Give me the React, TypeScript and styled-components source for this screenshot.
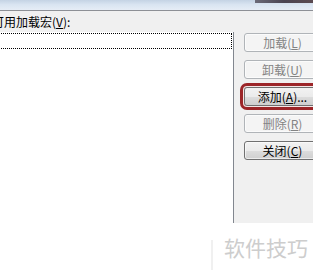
import React from "react";
import styled, { createGlobalStyle } from "styled-components";

const Global = createGlobalStyle`
  html, body { margin: 0; padding: 0; background: #ffffff; }
  body { font-family: "Noto Sans CJK SC", "Liberation Sans", sans-serif; }
`;

const Page = styled.div`
  width: 313px;
  height: 271px;
  overflow: hidden;
  background: #ffffff;
  display: flex;
  flex-direction: column;
`;

const TitleBar = styled.div`
  height: 10px;
  flex: none;
  display: flex;
  align-items: flex-start;
  justify-content: flex-end;
  background: linear-gradient(180deg, #c4d3e4 0%, #d9e4f1 45%, #e6edf6 100%);
  border-bottom: 1px solid #8d9096;
`;

const TitleDark = styled.div`
  width: 58px;
  height: 3px;
  background: linear-gradient(90deg, #6b6a78 0%, #4a4452 50%, #5a4a50 100%);
`;

const Body = styled.div`
  height: 212px;
  flex: none;
  display: flex;
  background: #f0f0f0;
`;

const LeftCol = styled.div`
  width: 246px;
  margin-left: -12px;
  flex: none;
  display: flex;
  flex-direction: column;
`;

const Label = styled.div`
  height: 21px;
  padding-left: 4px;
  font-size: 12px;
  line-height: 21px;
  color: #000;
  white-space: nowrap;
`;

const ListBox = styled.div`
  flex: 1;
  background: #ffffff;
  border-right: 1px solid #82878f;
  padding-top: 1px;
`;

const FocusRow = styled.div`
  height: 14px;
  border: 1px dotted #000;
  margin-right: 1px;
`;

const RightCol = styled.div`
  flex: none;
  padding-top: 22px;
  padding-left: 10px;
  display: flex;
  flex-direction: column;
  gap: 8px;
`;

const Button = styled.div<{ $disabled?: boolean; $marked?: boolean }>`
  width: 75px;
  height: 17px;
  border: 1px solid ${(p) => (p.$disabled ? "#b0b4b8" : "#707070")};
  border-radius: 3px;
  background: ${(p) =>
    p.$disabled
      ? "#f4f4f4"
      : "linear-gradient(180deg, #f2f2f2 0%, #ebebeb 50%, #dddddd 51%, #cfcfcf 100%)"};
  color: ${(p) => (p.$disabled ? "#838383" : "#000")};
  font-size: 12px;
  line-height: 17px;
  text-align: center;
  white-space: nowrap;
  box-shadow: ${(p) =>
    p.$marked ? "0 0 0 1px #f3e6e6, 0 0 0 4px #9c2528" : "inset 0 0 0 1px rgba(255,255,255,0.6)"};
  padding-right: 8px;
  box-sizing: content-box;
`;

const Footer = styled.div`
  flex: 1;
  display: flex;
  justify-content: flex-end;
  align-items: flex-start;
  padding-top: 12px;
  padding-right: 5px;
  gap: 4px;
`;

const Mark = styled.div`
  width: 7px;
  height: 30px;
  margin-top: 5px;
  border-left: 2px solid #ececec;
  opacity: 0.8;
`;

const Watermark = styled.div`
  font-size: 21px;
  line-height: 24px;
  color: #cdcdcd;
`;

export default function App() {
  return (
    <Page>
      <Global />
      <TitleBar>
        <TitleDark />
      </TitleBar>
      <Body>
        <LeftCol>
          <Label>
            可用加载宏(<u>V</u>):
          </Label>
          <ListBox>
            <FocusRow />
          </ListBox>
        </LeftCol>
        <RightCol>
          <Button $disabled>
            加载(<u>L</u>)
          </Button>
          <Button $disabled>
            卸载(<u>U</u>)
          </Button>
          <Button $marked>
            添加(<u>A</u>)...
          </Button>
          <Button $disabled>
            删除(<u>R</u>)
          </Button>
          <Button>
            关闭(<u>C</u>)
          </Button>
        </RightCol>
      </Body>
      <Footer>
        <Mark />
        <Watermark>软件技巧</Watermark>
      </Footer>
    </Page>
  );
}
